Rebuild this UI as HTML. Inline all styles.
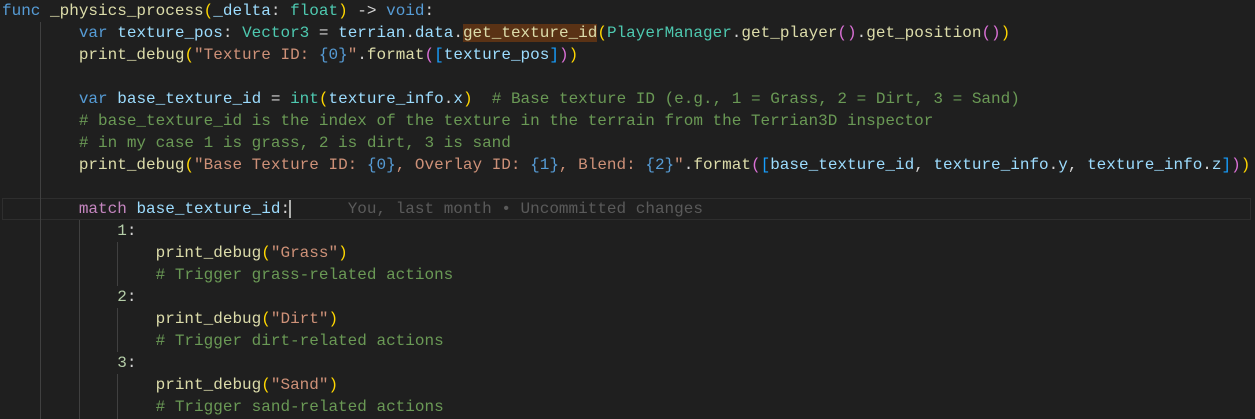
<!DOCTYPE html>
<html><head><meta charset="utf-8"><style>
body{margin:0;background:#1f1f1f;width:1255px;height:419px;overflow:hidden;position:relative}
.c{position:absolute;left:2px;top:0;font-family:"Liberation Mono",monospace;font-size:16px;line-height:22px;color:#d4d4d4;white-space:pre}
.k{color:#569cd6}.m{color:#c586c0}.f{color:#dcdcaa}.t{color:#4ec9b0}.s{color:#ce9178}.n{color:#b5cea8}.g{color:#6a9955}.v{color:#9cdcfe}
.b1{color:#ffd700}.b2{color:#da70d6}.b3{color:#179fff}
.hl{background:#5a3215}
.gd{position:absolute;width:1px;background:#404040}
.cur{position:absolute;left:2px;top:198px;width:1247px;height:20px;border:1px solid #2e2e2e}
.ghost{color:#5a5a5a}
</style></head><body>
<div class="cur"></div>
<div class="gd" style="left:40px;top:22px;height:397px"></div>
<div class="gd" style="left:79px;top:220px;height:199px"></div>
<div class="gd" style="left:117px;top:242px;height:44px"></div>
<div class="gd" style="left:117px;top:308px;height:44px"></div>
<div class="gd" style="left:117px;top:374px;height:45px"></div>
<div style="position:absolute;left:289px;top:200px;width:2px;height:18px;background:#aeafad"></div>
<div class="c"><span class="k">func</span> <span class="f">_physics_process</span><span class="b1">(</span><span class="v">_delta</span>: <span class="t">float</span><span class="b1">)</span> -&gt; <span class="k">void</span>:
        <span class="k">var</span> <span class="v">texture_pos</span>: <span class="t">Vector3</span> = <span class="v">terrian</span>.<span class="v">data</span>.<span class="f hl">get_texture_id</span><span class="b1">(</span><span class="t">PlayerManager</span>.<span class="f">get_player</span><span class="b2">()</span>.<span class="f">get_position</span><span class="b2">()</span><span class="b1">)</span>
        <span class="f">print_debug</span><span class="b1">(</span><span class="s">"Texture ID: </span><span class="k">{0}</span><span class="s">"</span>.<span class="f">format</span><span class="b2">(</span><span class="b3">[</span><span class="v">texture_pos</span><span class="b3">]</span><span class="b2">)</span><span class="b1">)</span>

        <span class="k">var</span> <span class="v">base_texture_id</span> = <span class="t">int</span><span class="b1">(</span><span class="v">texture_info</span>.<span class="v">x</span><span class="b1">)</span>  <span class="g"># Base texture ID (e.g., 1 = Grass, 2 = Dirt, 3 = Sand)</span>
        <span class="g"># base_texture_id is the index of the texture in the terrain from the Terrian3D inspector</span>
        <span class="g"># in my case 1 is grass, 2 is dirt, 3 is sand</span>
        <span class="f">print_debug</span><span class="b1">(</span><span class="s">"Base Texture ID: </span><span class="k">{0}</span><span class="s">, Overlay ID: </span><span class="k">{1}</span><span class="s">, Blend: </span><span class="k">{2}</span><span class="s">"</span>.<span class="f">format</span><span class="b2">(</span><span class="b3">[</span><span class="v">base_texture_id</span>, <span class="v">texture_info</span>.<span class="v">y</span>, <span class="v">texture_info</span>.<span class="v">z</span><span class="b3">]</span><span class="b2">)</span><span class="b1">)</span>

        <span class="m">match</span> <span class="v">base_texture_id</span>:      <span class="ghost">You, last month • Uncommitted changes</span>
            <span class="n">1</span>:
                <span class="f">print_debug</span><span class="b1">(</span><span class="s">"Grass"</span><span class="b1">)</span>
                <span class="g"># Trigger grass-related actions</span>
            <span class="n">2</span>:
                <span class="f">print_debug</span><span class="b1">(</span><span class="s">"Dirt"</span><span class="b1">)</span>
                <span class="g"># Trigger dirt-related actions</span>
            <span class="n">3</span>:
                <span class="f">print_debug</span><span class="b1">(</span><span class="s">"Sand"</span><span class="b1">)</span>
                <span class="g"># Trigger sand-related actions</span>
</div>
</body></html>
